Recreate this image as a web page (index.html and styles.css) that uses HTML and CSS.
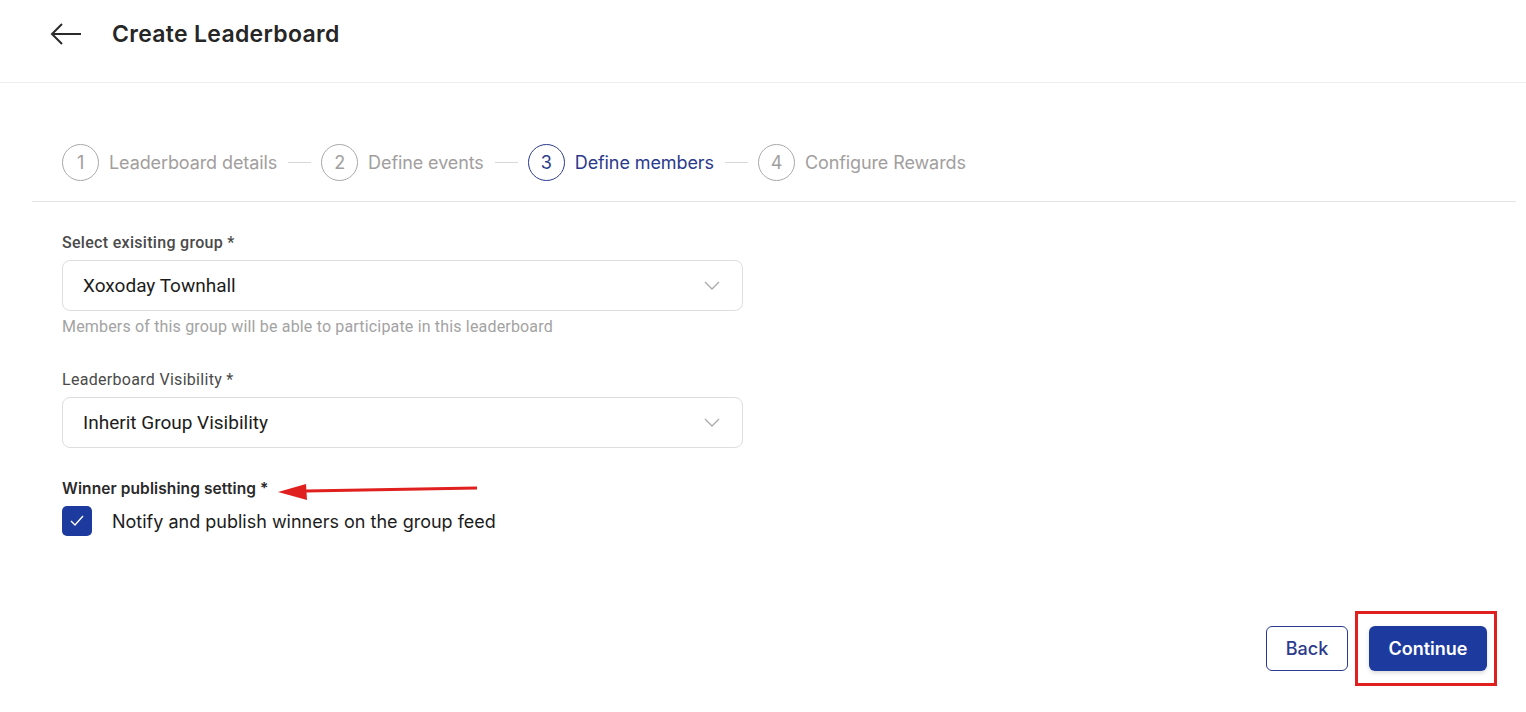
FILE: index.html
```html
<!DOCTYPE html>
<html lang="en">
<head>
    <meta charset="UTF-8">
    <meta name="viewport" content="width=device-width, initial-scale=1.0">
    <title>Create Leaderboard</title>
    <link rel="stylesheet" href="styles.css">
</head>
<body>

<div class="top-bar">
    <svg class="back-arrow" width="32" height="24" viewBox="0 0 32 24">
        <path d="M31 12H2M12 2L2 12l10 10" fill="none" stroke="#2b2b2b" stroke-width="2"/>
    </svg>
    <h1>Create Leaderboard</h1>
</div>

<div class="page">
    <div class="stepper">
        <div class="step"><span class="step-num">1</span><span class="step-name">Leaderboard details</span></div>
        <span class="step-line"></span>
        <div class="step"><span class="step-num">2</span><span class="step-name">Define events</span></div>
        <span class="step-line"></span>
        <div class="step active"><span class="step-num">3</span><span class="step-name">Define members</span></div>
        <span class="step-line"></span>
        <div class="step"><span class="step-num">4</span><span class="step-name">Configure Rewards</span></div>
    </div>

    <div class="form-area">
        <label class="field-label bold">Select exisiting group *</label>
        <div class="select-box">
            <span>Xoxoday Townhall</span>
            <svg width="16" height="10" viewBox="0 0 16 10"><path d="M1 1l7 7 7-7" fill="none" stroke="#aaa" stroke-width="1.3"/></svg>
        </div>
        <p class="hint">Members of this group will be able to participate in this leaderboard</p>

        <label class="field-label">Leaderboard Visibility *</label>
        <div class="select-box">
            <span>Inherit Group Visibility</span>
            <svg width="16" height="10" viewBox="0 0 16 10"><path d="M1 1l7 7 7-7" fill="none" stroke="#aaa" stroke-width="1.3"/></svg>
        </div>

        <div class="winner">
            <div class="winner-title">Winner publishing setting *</div>
            <svg class="annot-arrow" width="210" height="20" viewBox="0 0 210 20">
                <path d="M201 6L30 9" stroke="#e0201e" stroke-width="3" fill="none"/>
                <path d="M2 10L30 2l1 16z" fill="#e0201e"/>
            </svg>
            <div class="check-row">
                <span class="checkbox">
                    <svg width="14" height="12" viewBox="0 0 14 12"><path d="M1 6l4 4 8-9" fill="none" stroke="#fff" stroke-width="1.4"/></svg>
                </span>
                <span>Notify and publish winners on the group feed</span>
            </div>
        </div>
    </div>

    <div class="footer">
        <button class="btn-back">Back</button>
        <span class="highlight"><button class="btn-continue">Continue</button></span>
    </div>
</div>

</body>
</html>
```

FILE: styles.css
```css
body {
    margin: 0;
    font-family: Inter, "Noto Sans", sans-serif;
    color: #222;
    background: #fff;
}
.top-bar {
    display: flex;
    align-items: center;
    height: 82px;
    padding-left: 50px;
    border-bottom: 1px solid #eeeeee;
    margin-top: -14px;
    padding-top: 14px;
}
.back-arrow {
    margin-right: 30px;
    margin-top: -15px;
}
.top-bar h1 {
    margin: 0;
    margin-top: -15px;
    font-size: 23px;
    font-weight: 600;
    letter-spacing: 0.3px;
    color: #262626;
}
.page {
    padding: 0 10px 0 32px;
}
.stepper {
    display: flex;
    align-items: center;
    padding: 61px 0 20px 30px;
    border-bottom: 1px solid #e4e4e4;
}
.step {
    display: flex;
    align-items: center;
    gap: 10px;
    color: #a29e9e;
    font-size: 18px;
    letter-spacing: -0.1px;
}
.step-num {
    width: 35px;
    height: 35px;
    border: 1px solid #a9a9a9;
    border-radius: 50%;
    display: flex;
    align-items: center;
    justify-content: center;
    font-size: 18px;
}
.step.active {
    color: #2b3a8c;
}
.step.active .step-num {
    border-color: #2b3a8c;
}
.step-line {
    width: 23px;
    height: 1px;
    background: #d8d8d8;
    margin: 0 10px 0 11px;
}
.form-area {
    padding: 31px 0 0 30px;
    width: 681px;
}
.field-label {
    display: block;
    font-family: Roboto, sans-serif;
    font-size: 16px;
    line-height: 20px;
    letter-spacing: 0.3px;
    color: #4a4a4a;
    margin-bottom: 7px;
}
.field-label.bold {
    font-weight: 500;
}
.select-box {
    height: 49px;
    border: 1px solid #dedede;
    border-radius: 8px;
    display: flex;
    align-items: center;
    justify-content: space-between;
    padding: 0 22px 0 20px;
    font-family: Roboto, sans-serif;
    font-size: 19px;
    color: #1c1c1c;
}
.hint {
    margin: 6px 0 33px;
    font-family: Roboto, sans-serif;
    font-size: 16px;
    line-height: 20px;
    letter-spacing: 0.17px;
    color: #a3a3a3;
}
.winner {
    position: relative;
    margin-top: 31px;
}
.winner-title {
    font-size: 15.5px;
    line-height: 20px;
    letter-spacing: 0.1px;
    font-weight: 600;
    color: #2a2a2a;
    margin-bottom: 7px;
}
.annot-arrow {
    position: absolute;
    left: 214px;
    top: 3px;
}
.check-row {
    display: flex;
    align-items: center;
    gap: 20px;
    font-size: 18px;
    color: #1c1c1c;
}
.checkbox {
    width: 30px;
    height: 30px;
    border-radius: 5px;
    background: #1d3b9e;
    display: flex;
    align-items: center;
    justify-content: center;
}
.footer {
    display: flex;
    justify-content: flex-end;
    align-items: center;
    margin-top: 75px;
    padding-right: 19px;
}
.btn-back {
    width: 82px;
    height: 45px;
    border: 1px solid #2b3a8c;
    border-radius: 6px;
    background: #fff;
    color: #2b3a8c;
    font-family: Inter, sans-serif;
    font-size: 18px;
    font-weight: 500;
    margin-right: 7px;
}
.highlight {
    display: inline-flex;
    border: 3px solid #e0201e;
    padding: 12px 7px 12px 11px;
}
.btn-continue {
    width: 118px;
    height: 45px;
    border: none;
    border-radius: 6px;
    background: #1d3b9e;
    color: #fff;
    font-family: Inter, sans-serif;
    font-size: 18px;
    font-weight: 600;
    box-shadow: 0 2px 4px rgba(0, 0, 0, 0.15);
}
```
